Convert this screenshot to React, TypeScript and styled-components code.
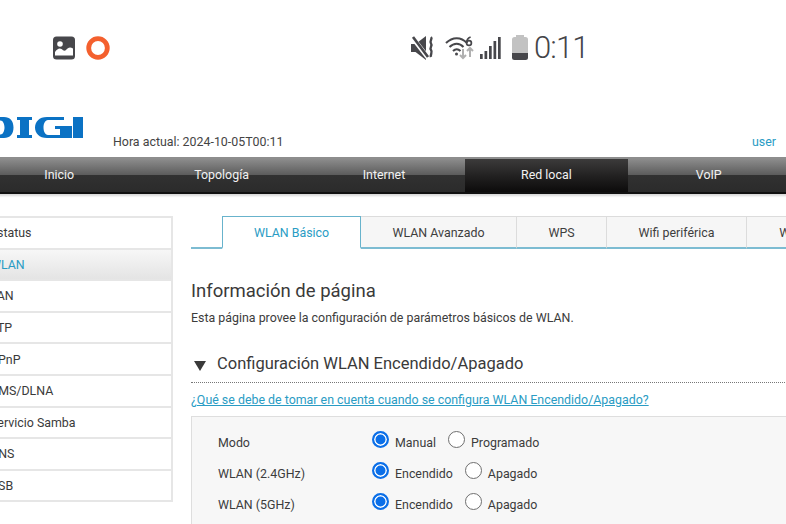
import React from "react";
import styled, { createGlobalStyle } from "styled-components";

const Global = createGlobalStyle`
  html, body { margin: 0; padding: 0; background: #fff; width: 786px; height: 524px; overflow: hidden; }
  * { box-sizing: border-box; }
  body { font-family: Roboto, "Liberation Sans", sans-serif; color: #3a3a3a; }
`;

const Page = styled.div`
  width: 786px; height: 524px; overflow: hidden; background: #fff;
`;
const StatusBar = styled.div`
  height: 95px; display: flex; align-items: center; padding: 0 0 0 52px;
`;
const LeftIcons = styled.div`
  display: flex; align-items: center; gap: 10px; width: 358px;
`;
const RightIcons = styled.div`
  display: flex; align-items: center;
`;
const Clock = styled.span`
  font-size: 31px; font-weight: 300; color: #444448; letter-spacing: -0.9px; margin-left: 6px; line-height: 36px;
`;
const Header = styled.div`
  height: 62px; position: relative; display: flex; align-items: flex-end; padding: 0 10px 7px 113px;
`;
const Logo = styled.svg`
  position: absolute; left: 0; top: 19px;
`;
const Time = styled.span`
  font-size: 12.4px; color: #444; flex: 1; line-height: 16px;
`;
const User = styled.span`
  font-size: 12.4px; color: #2a9cc4; line-height: 16px;
`;
const Nav = styled.nav`
  display: flex; margin-left: -22px; width: 830px; height: 37px;
  border-top: 2px solid #8d8d8d; border-bottom: 2px solid #111;
  box-shadow: 0 2px 2px #d8d8d8;
`;
const NavItem = styled.div<{ $active?: boolean }>`
  width: 162.4px; flex: none; display: flex; align-items: center; justify-content: center;
  font-size: 12.4px; color: #f2f2f2; padding-bottom: 3px;
  background: ${p => p.$active
    ? "linear-gradient(#3c3b3b 0%, #201f1f 55%, #0c0b0b 100%)"
    : "linear-gradient(#8c8c8c 0%, #5c5c5c 48%, #313131 50%, #2b2b2b 100%)"};
`;
const Main = styled.div`
  display: flex; align-items: flex-start; margin-top: 22px;
`;
const Side = styled.ul`
  list-style: none; margin: 0 0 0 -30px; padding: 0; width: 202.500px; flex: none;
  border: 2px solid #e6e6e6; border-left: none; background: #fff;
`;
const SideItem = styled.li<{ $active?: boolean }>`
  height: 31.6px; display: flex; align-items: center; padding-left: 20px;
  font-size: 12.4px; color: ${p => p.$active ? "#2a9cc4" : "#3a3a3a"};
  border-bottom: 2px solid #e6e6e6;
  background: ${p => p.$active ? "linear-gradient(#f7f7f7, #e4e4e4)" : "#fff"};
  &:last-child { border-bottom: none; height: 29.6px; }
`;
const Content = styled.div`
  margin-left: 18.500px; flex: none; width: 640px;
`;
const Tabs = styled.div`
  display: flex; height: 33px; padding-left: 31px; border-bottom: 2px solid #7dbcd2;
`;
const Tab = styled.div<{ $active?: boolean; $w: number }>`
  width: ${p => p.$w}px; flex: none; height: 33px; display: flex; align-items: center; justify-content: center;
  font-size: 12.4px;
  color: ${p => p.$active ? "#2a9cc4" : "#3e3e3e"};
  background: ${p => p.$active ? "#fff" : "#f6f6f6"};
  border: ${p => p.$active ? "1px solid #68b3cc" : "1px solid #dcdcdc"};
  border-bottom: ${p => p.$active ? "2px solid #fff" : "2px solid #7dbcd2"};
  border-left-width: ${p => p.$active ? "1px" : "0"};
`;
const Title = styled.h1`
  font-size: 18.500px; font-weight: 400; margin: 31px 0 0; line-height: 22px; color: #3a3a3a;
`;
const Desc = styled.p`
  font-size: 12.4px; margin: 8px 0 0; line-height: 16px; color: #3c3c3c;
`;
const SectionHead = styled.div`
  display: flex; align-items: center; margin-top: 24px; height: 33px; padding-bottom: 6px;
  border-bottom: 1px dotted #777; width: 600px;
`;
const Arrow = styled.svg`
  margin: 6px 0 0 3px; flex: none;
`;
const SectionTitle = styled.h2`
  font-size: 16.500px; font-weight: 400; margin: 0 0 0 11px; color: #3a3a3a;
`;
const Help = styled.a`
  display: block; font-size: 12.4px; color: #2a9cc4; text-decoration: underline; margin-top: 9px; line-height: 16px;
`;
const Panel = styled.div`
  margin-top: 8px; width: 600px; height: 130px; border: 1px solid #dedede; background: #f7f7f7;
  padding: 10px 0 0 26px;
`;
const Row = styled.div`
  display: flex; align-items: center; height: 31px; font-size: 12.4px; color: #3c3c3c;
`;
const RowLabel = styled.span`
  width: 154px; flex: none;
`;
const Radio = styled.span<{ $on?: boolean }>`
  width: 17px; height: 17px; border-radius: 50%; flex: none; margin-top: -7px; background: #fff;
  border: ${p => p.$on ? "2px solid #0b6fe8" : "1px solid #6f6f6f"};
  box-shadow: ${p => p.$on ? "inset 0 0 0 1.5px #fff" : "none"};
  ${p => p.$on ? "background: #0b6fe8;" : ""}
`;
const RadioText = styled.span<{ $gap: number }>`
  margin-left: 6px; margin-right: ${p => p.$gap}px;
`;

const PicIcon = () => (
  <svg width="24" height="24" viewBox="0 0 24 24">
    <rect x="1" y="0.500" width="22" height="23" rx="3.500" fill="#47474b" />
    <circle cx="8" cy="8" r="2.800" fill="#fff" />
    <path d="M3 19.500v-3.500c2-3 4.500-4.500 6.500-3 1.500 1.200 3 2.500 4.500 1 2-2.500 4-3.500 7-1.500v7z" fill="#fff" />
  </svg>
);
const Ring = () => (
  <svg width="24" height="24" viewBox="0 0 24 24">
    <circle cx="12" cy="12" r="9.300" fill="none" stroke="#f4602e" strokeWidth="4.800" />
  </svg>
);
const Mute = () => (
  <svg width="25" height="26" viewBox="0 0 25 26" fill="none">
    <path d="M1 9h4.500L16 1v24L5.500 17H1z" fill="#47474b" />
    <path d="M2 2 19 24" stroke="#fff" strokeWidth="4.500" />
    <path d="M3 2 18 22" stroke="#47474b" strokeWidth="2.600" />
    <path d="M21 2c2 2-2 4 0 6.500s-2 4 0 6.500 -1 4 0 7" stroke="#47474b" strokeWidth="2.400" />
  </svg>
);
const Wifi = () => (
  <svg width="30" height="24" viewBox="0 0 30 24" fill="none" style={{ marginLeft: 10 }}>
    <path d="M1 7c6.500-6.500 15-6.500 21 0M4.500 11c4.500-4.500 10-4.500 14 0M8 15c2.500-2.500 5-2.500 7.500 0" stroke="#47474b" strokeWidth="2" />
    <circle cx="11.500" cy="18" r="1.500" fill="#47474b" />
    <path d="M18 13v9m-3-3 3 3 3-3" stroke="#b0b0b0" strokeWidth="2" />
    <path d="M25 21v-9m-3 3 3-3 3 3" stroke="#b0b0b0" strokeWidth="2" />
    <circle cx="24" cy="7" r="2.400" stroke="#47474b" strokeWidth="1.700" />
    <path d="M21.600 7c0-3.500 1.400-5 4-6" stroke="#47474b" strokeWidth="1.700" />
  </svg>
);
const Signal = () => (
  <svg width="21" height="24" viewBox="0 0 21 24" fill="#47474b" style={{ marginLeft: 5 }}>
    <rect x="0" y="18" width="2.700" height="5" />
    <rect x="4.500" y="15" width="2.700" height="8" />
    <rect x="9" y="10" width="2.700" height="13" />
    <rect x="13.500" y="5" width="2.700" height="18" />
    <rect x="18" y="1" width="2.700" height="22" />
  </svg>
);
const Battery = () => (
  <svg width="16" height="25" viewBox="0 0 16 25" style={{ marginLeft: 11 }}>
    <path d="M4 0h8v2h1.500A2.500 2.500 0 0 1 16 4.500V18H0V4.500A2.500 2.500 0 0 1 2.500 2H4z" fill="#c2c2c2" />
    <path d="M0 18h16v4.500a2.500 2.500 0 0 1-2.500 2.500h-11A2.500 2.500 0 0 1 0 22.500z" fill="#47474b" />
  </svg>
);
const DigiLogo = () => (
  <Logo width="84" height="24" viewBox="0 0 84 24" fill="#0b72c4">
    <path d="M0 3h4c6 0 9.500 4 9.500 10.500S10 24 4 24H0v-3.500h.5C3 20.500 4.500 17 4.500 13.500S3 6.500 .5 6.500H0z" />
    <path d="M17 3h15v3h-3v15h3v3H17v-3h3V6h-3z" />
    <path d="M64 3H47C39 3 35 8 35 13.500S39 24 47 24h25V12H55v3h5v6h-12c-3 0-4.500-4-4.500-7.500S45 6 48 6h16z" />
    <path d="M73 3h10v21H73z" />
  </Logo>
);

const side = ["Estatus", "WLAN", "LAN", "FTP", "UPnP", "DMS/DLNA", "Servicio Samba", "DNS", "USB"];
const nav = ["Inicio", "Topología", "Internet", "Red local", "VoIP"];
const tabs: [string, number][] = [["WLAN Básico", 139], ["WLAN Avanzado", 156], ["WPS", 90], ["Wifi periférica", 140], ["WLAN", 100]];
const rows: [string, string, string, number][] = [
  ["Modo", "Manual", "Programado", 12],
  ["WLAN (2.4GHz)", "Encendido", "Apagado", 12],
  ["WLAN (5GHz)", "Encendido", "Apagado", 12],
];

export default function App() {
  return (
    <Page>
      <Global />
      <StatusBar>
        <LeftIcons><PicIcon /><Ring /></LeftIcons>
        <RightIcons><Mute /><Wifi /><Signal /><Battery /><Clock>0:11</Clock></RightIcons>
      </StatusBar>
      <Header>
        <DigiLogo />
        <Time>Hora actual: 2024-10-05T00:11</Time>
        <User>user</User>
      </Header>
      <Nav>
        {nav.map(n => <NavItem key={n} $active={n === "Red local"}>{n}</NavItem>)}
      </Nav>
      <Main>
        <Side>
          {side.map(s => <SideItem key={s} $active={s === "WLAN"}>{s}</SideItem>)}
        </Side>
        <Content>
          <Tabs>
            {tabs.map(([t, w], i) => <Tab key={t} $w={w} $active={i === 0}>{t}</Tab>)}
          </Tabs>
          <Title>Información de página</Title>
          <Desc>Esta página provee la configuración de parámetros básicos de WLAN.</Desc>
          <SectionHead>
            <Arrow width="12" height="10" viewBox="0 0 12 10"><path d="M0 0h12L6 10z" fill="#3a3a3a" /></Arrow>
            <SectionTitle>Configuración WLAN Encendido/Apagado</SectionTitle>
          </SectionHead>
          <Help>¿Qué se debe de tomar en cuenta cuando se configura WLAN Encendido/Apagado?</Help>
          <Panel>
            {rows.map(([l, a, b, g]) => (
              <Row key={l}>
                <RowLabel>{l}</RowLabel>
                <Radio $on /><RadioText $gap={g}>{a}</RadioText>
                <Radio /><RadioText $gap={0}>{b}</RadioText>
              </Row>
            ))}
          </Panel>
        </Content>
      </Main>
    </Page>
  );
}
